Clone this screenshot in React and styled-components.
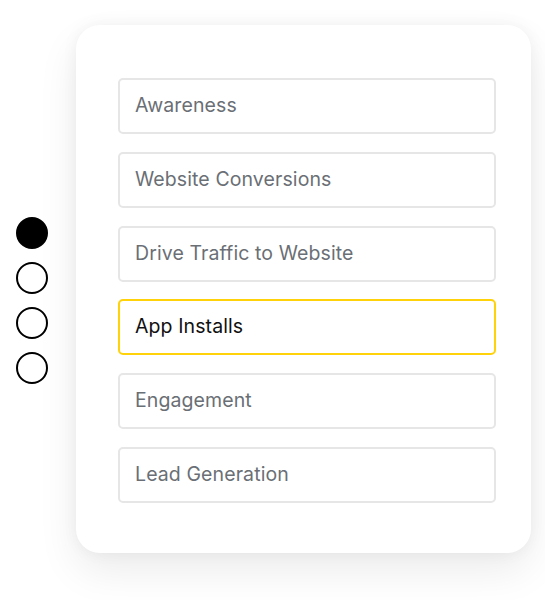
import React from "react";
import styled, { createGlobalStyle } from "styled-components";

const GlobalStyle = createGlobalStyle`
  body {
    margin: 0;
    background: #ffffff;
    font-family: Inter, "Liberation Sans", sans-serif;
  }
`;

const Page = styled.div`
  display: flex;
  align-items: flex-start;
  gap: 28px;
  padding: 25px 0 0 16px;
  width: 545px;
  height: 600px;
  box-sizing: border-box;
`;

const Dots = styled.div`
  display: flex;
  flex-direction: column;
  gap: 13px;
  margin-top: 192px;
`;

const Dot = styled.span`
  display: block;
  width: 32px;
  height: 32px;
  box-sizing: border-box;
  border-radius: 50%;
  border: 2px solid #000;
  background: ${p => (p.active ? "#000" : "#fff")};
`;

const Card = styled.div`
  width: 455px;
  box-sizing: border-box;
  padding: 53px 35px 50px 42px;
  background: #fff;
  border-radius: 24px;
  box-shadow: 0 18px 40px rgba(0, 0, 0, 0.08), 0 0 16px rgba(0, 0, 0, 0.05);
  display: flex;
  flex-direction: column;
  gap: 17.8px;
`;

const Option = styled.div`
  height: 56px;
  box-sizing: border-box;
  display: flex;
  align-items: center;
  padding: 0 15px 2px;
  border: 2px solid ${p => (p.selected ? "#ffd20a" : "#e6e6e6")};
  border-radius: 5px;
  font-size: 19.5px;
  letter-spacing: 0.1px;
  color: ${p => (p.selected ? "#111" : "#6a6f75")};
`;

const options = [
  "Awareness",
  "Website Conversions",
  "Drive Traffic to Website",
  "App Installs",
  "Engagement",
  "Lead Generation",
];

export default function App() {
  return (
    <>
      <GlobalStyle />
      <Page>
        <Dots>
          {[0, 1, 2, 3].map(i => (
            <Dot key={i} active={i === 0} />
          ))}
        </Dots>
        <Card>
          {options.map(o => (
            <Option key={o} selected={o === "App Installs"}>
              {o}
            </Option>
          ))}
        </Card>
      </Page>
    </>
  );
}
